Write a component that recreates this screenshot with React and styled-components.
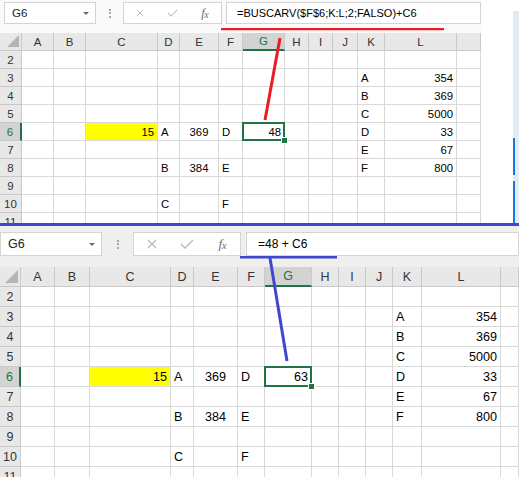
import React from 'react';
import styled, { createGlobalStyle } from 'styled-components';

const GlobalStyle = createGlobalStyle`
  html, body {
    margin: 0;
    padding: 0;
    background: #fff;
  }
  body {
    width: 519px;
    height: 477px;
    overflow: hidden;
    font-family: "Liberation Sans", Arial, sans-serif;
  }
`;

const GREEN = '#217346';
const RED = '#ED1C24';
const INDIGO = '#3F48CC';

const COLS = ['A', 'B', 'C', 'D', 'E', 'F', 'G', 'H', 'I', 'J', 'K', 'L', 'M'];
const ROWS = [2, 3, 4, 5, 6, 7, 8, 9, 10, 11];

const ALIGN = { C: 'right', D: 'left', E: 'center', F: 'left', G: 'right', K: 'left', L: 'right' };

const baseData = {
  3: { K: 'A', L: '354' },
  4: { K: 'B', L: '369' },
  5: { K: 'C', L: '5000' },
  6: { C: '15', D: 'A', E: '369', F: 'D', K: 'D', L: '33' },
  7: { K: 'E', L: '67' },
  8: { D: 'B', E: '384', F: 'E', K: 'F', L: '800' },
  10: { D: 'C', F: 'F' },
};

const top = {
  barH: 33,
  barPadTop: 2,
  barPadLeft: 4,
  barBg: '#fafafa',
  boxH: 22,
  nameW: 92,
  gripW: 27,
  btnW: 99,
  slotW: 33,
  inputGap: 4,
  textFont: 11,
  inputPad: 10,
  crossSize: 8,
  checkSize: 11,
  fxFont: 12.5,
  cols: [22, 32, 32, 72, 22, 39, 24, 42, 24, 24, 25, 27, 72, 24],
  rowH: 18,
  gridH: 190,
  cellFont: 11.3,
  headFont: 11.5,
  tri: 12,
  result: '48',
  formula: '=BUSCARV($F$6;K:L;2;FALSO)+C6',
};

const bottom = {
  barH: 41,
  barPadTop: 6,
  barPadLeft: 0,
  barBg: '#efefef',
  boxH: 24,
  nameW: 102,
  gripW: 31,
  btnW: 108,
  slotW: 36,
  inputGap: 5,
  textFont: 12,
  inputPad: 11,
  crossSize: 10,
  checkSize: 14,
  fxFont: 13.5,
  cols: [21, 34, 35, 81, 23, 44, 27, 47, 27, 27, 27, 29, 79, 18],
  rowH: 20,
  gridH: 210,
  cellFont: 12.6,
  headFont: 12.5,
  tri: 13,
  result: '63',
  formula: '=48 + C6',
};

const Page = styled.div`
  position: relative;
  width: 519px;
  height: 477px;
  overflow: hidden;
  display: flex;
  flex-direction: column;
  background: #fff;
`;

const TopPanel = styled.div`
  display: flex;
  height: 223px;
`;

const Workbook = styled.div`
  display: flex;
  flex-direction: column;
  width: ${(p) => p.$w}px;
  flex-shrink: 0;
`;

const Divider = styled.div`
  height: 3px;
  background: ${INDIGO};
  flex-shrink: 0;
`;

const Side = styled.div`
  flex: 1;
  display: flex;
  justify-content: flex-end;
  padding-top: 11px;
  background: #fff;
`;

const Rail = styled.div`
  width: 6px;
  display: flex;
  flex-direction: column;
  background: #e3ebf4;
`;

const RailMark = styled.div`
  height: ${(p) => p.$h}px;
  margin-top: ${(p) => p.$top}px;
  border-left: 2px solid #1a78d6;
`;

const Bar = styled.div`
  display: flex;
  align-items: flex-start;
  height: ${(p) => p.$h}px;
  padding: ${(p) => p.$padTop}px 0 0 ${(p) => p.$padLeft}px;
  box-sizing: border-box;
  background: ${(p) => p.$bg};
  flex-shrink: 0;
`;

const Field = styled.div`
  height: ${(p) => p.$h}px;
  box-sizing: border-box;
  border: 1px solid #d4d4d4;
  background: #fff;
  display: flex;
  align-items: center;
  flex-shrink: 0;
`;

const NameBox = styled(Field)`
  width: ${(p) => p.$w}px;
  padding: 0 6px 0 7px;
  justify-content: space-between;
  font-size: ${(p) => p.$font}px;
  color: #222;
`;

const Caret = styled.span`
  width: 0;
  height: 0;
  border-left: 3.5px solid transparent;
  border-right: 3.5px solid transparent;
  border-top: 3.5px solid #6a6a6a;
`;

const Grip = styled.div`
  width: ${(p) => p.$w}px;
  height: ${(p) => p.$h}px;
  display: flex;
  flex-direction: column;
  align-items: center;
  justify-content: center;
  gap: 1.5px;
  flex-shrink: 0;

  span {
    width: 2px;
    height: 2px;
    background: #a8a8a8;
  }
`;

const Buttons = styled(Field)`
  width: ${(p) => p.$w}px;
`;

const Slot = styled.div`
  width: ${(p) => p.$w}px;
  height: 100%;
  display: flex;
  align-items: center;
  justify-content: center;
`;

const Fx = styled.span`
  font-family: "Liberation Serif", "Times New Roman", serif;
  font-style: italic;
  font-size: ${(p) => p.$font}px;
  color: #6f6f6f;
  letter-spacing: -0.5px;

  sub {
    font-size: 0.8em;
    vertical-align: -1px;
  }
`;

const Input = styled(Field)`
  flex: 1;
  margin-left: ${(p) => p.$gap}px;
  padding-left: ${(p) => p.$pad}px;
  font-size: ${(p) => p.$font}px;
  color: #000;
  white-space: nowrap;
`;

const Grid = styled.div`
  display: grid;
  grid-template-columns: ${(p) => p.$cols.map((c) => `${c}px`).join(' ')};
  grid-auto-rows: ${(p) => p.$rowH}px;
  height: ${(p) => p.$h}px;
  overflow: hidden;
  background: #fff;
  flex-shrink: 0;
`;

const Head = styled.div`
  box-sizing: border-box;
  background: ${(p) => (p.$sel ? '#d3d3d3' : '#e8e8e8')};
  border-right: 1px solid #c9c9c9;
  border-bottom: 1px solid #c9c9c9;
  color: ${(p) => (p.$sel ? GREEN : '#333')};
  font-size: ${(p) => p.$font}px;
  display: flex;
  align-items: center;
  justify-content: center;
`;

const ColHead = styled(Head)`
  border-bottom: ${(p) => (p.$sel ? `2px solid ${GREEN}` : '1px solid #c9c9c9')};
`;

const RowHead = styled(Head)`
  border-right: ${(p) => (p.$sel ? `2px solid ${GREEN}` : '1px solid #c9c9c9')};
`;

const Corner = styled(Head)`
  align-items: flex-end;
  justify-content: flex-end;
  padding: 0 2px 3px 0;
`;

const Triangle = styled.span`
  width: 0;
  height: 0;
  border-left: ${(p) => p.$s}px solid transparent;
  border-bottom: ${(p) => p.$s}px solid #b5b5b5;
`;

const Cell = styled.div`
  position: relative;
  box-sizing: border-box;
  border-right: 1px solid #d9d9d9;
  border-bottom: 1px solid #d9d9d9;
  background: ${(p) => (p.$fill ? '#ffff00' : '#fff')};
  font-size: ${(p) => p.$font}px;
  color: #000;
  display: flex;
  align-items: center;
  justify-content: ${(p) =>
    p.$align === 'right' ? 'flex-end' : p.$align === 'center' ? 'center' : 'flex-start'};
  padding: 0 3px;
  white-space: nowrap;

  ${(p) =>
    p.$sel &&
    `
    z-index: 2;
    &::after {
      content: '';
      position: absolute;
      top: -1px;
      left: -1px;
      right: -1px;
      bottom: -1px;
      border: 2px solid ${GREEN};
    }
    &::before {
      content: '';
      position: absolute;
      right: -4px;
      bottom: -4px;
      width: 5px;
      height: 5px;
      background: ${GREEN};
      border: 1px solid #fff;
      z-index: 3;
    }
  `}
`;

const Overlay = styled.svg`
  position: absolute;
  top: 0;
  left: 0;
  pointer-events: none;
  z-index: 10;
`;

const Cross = ({ size }) => (
  <svg width={size} height={size} viewBox="0 0 10 10">
    <path d="M1 1 L9 9 M9 1 L1 9" stroke="#bcbcbc" strokeWidth="1.2" fill="none" />
  </svg>
);

const Check = ({ size }) => (
  <svg width={size} height={size * 0.72} viewBox="0 0 14 10">
    <path d="M1 5 L5 9 L13 1" stroke="#bcbcbc" strokeWidth="1.4" fill="none" />
  </svg>
);

const FormulaBar = ({ cfg }) => (
  <Bar $h={cfg.barH} $padTop={cfg.barPadTop} $padLeft={cfg.barPadLeft} $bg={cfg.barBg}>
    <NameBox $h={cfg.boxH} $w={cfg.nameW} $font={cfg.textFont + 0.5}>
      G6
      <Caret />
    </NameBox>
    <Grip $w={cfg.gripW} $h={cfg.boxH}>
      <span />
      <span />
      <span />
    </Grip>
    <Buttons $h={cfg.boxH} $w={cfg.btnW}>
      <Slot $w={cfg.slotW}>
        <Cross size={cfg.crossSize} />
      </Slot>
      <Slot $w={cfg.slotW}>
        <Check size={cfg.checkSize} />
      </Slot>
      <Slot $w={cfg.slotW}>
        <Fx $font={cfg.fxFont}>
          f<sub>x</sub>
        </Fx>
      </Slot>
    </Buttons>
    <Input $h={cfg.boxH} $gap={cfg.inputGap} $pad={cfg.inputPad} $font={cfg.textFont}>
      {cfg.formula}
    </Input>
  </Bar>
);

const Sheet = ({ cfg }) => (
  <Grid $cols={cfg.cols} $rowH={cfg.rowH} $h={cfg.gridH}>
    <Corner $font={cfg.headFont}>
      <Triangle $s={cfg.tri} />
    </Corner>
    {COLS.map((c) => (
      <ColHead key={c} $sel={c === 'G'} $font={cfg.headFont}>
        {c === 'M' ? '' : c}
      </ColHead>
    ))}
    {ROWS.map((r) => {
      const row = r === 6 ? { ...baseData[6], G: cfg.result } : baseData[r] || {};
      return (
        <React.Fragment key={r}>
          <RowHead $sel={r === 6} $font={cfg.headFont}>
            {r}
          </RowHead>
          {COLS.map((c) => (
            <Cell
              key={c}
              $font={cfg.cellFont}
              $align={ALIGN[c]}
              $fill={r === 6 && c === 'C'}
              $sel={r === 6 && c === 'G'}
            >
              {row[c] || ''}
            </Cell>
          ))}
        </React.Fragment>
      );
    })}
  </Grid>
);

const App = () => (
  <>
    <GlobalStyle />
    <Page>
      <TopPanel>
        <Workbook $w={481}>
          <FormulaBar cfg={top} />
          <Sheet cfg={top} />
        </Workbook>
        <Side>
          <Rail>
            <RailMark $top={127} $h={37} />
            <RailMark $top={6} $h={42} />
          </Rail>
        </Side>
      </TopPanel>
      <Divider />
      <Workbook $w={519}>
        <FormulaBar cfg={bottom} />
        <Sheet cfg={bottom} />
      </Workbook>
      <Overlay width="519" height="477" viewBox="0 0 519 477">
        <line x1="221" y1="29.2" x2="444" y2="29.2" stroke={RED} strokeWidth="2.2" />
        <line x1="280" y1="38" x2="265" y2="120" stroke={RED} strokeWidth="3" />
        <line x1="240" y1="257.3" x2="337" y2="257.3" stroke={INDIGO} strokeWidth="2.5" />
        <line x1="270" y1="258" x2="287" y2="361" stroke={INDIGO} strokeWidth="3" />
      </Overlay>
    </Page>
  </>
);

export default App;
